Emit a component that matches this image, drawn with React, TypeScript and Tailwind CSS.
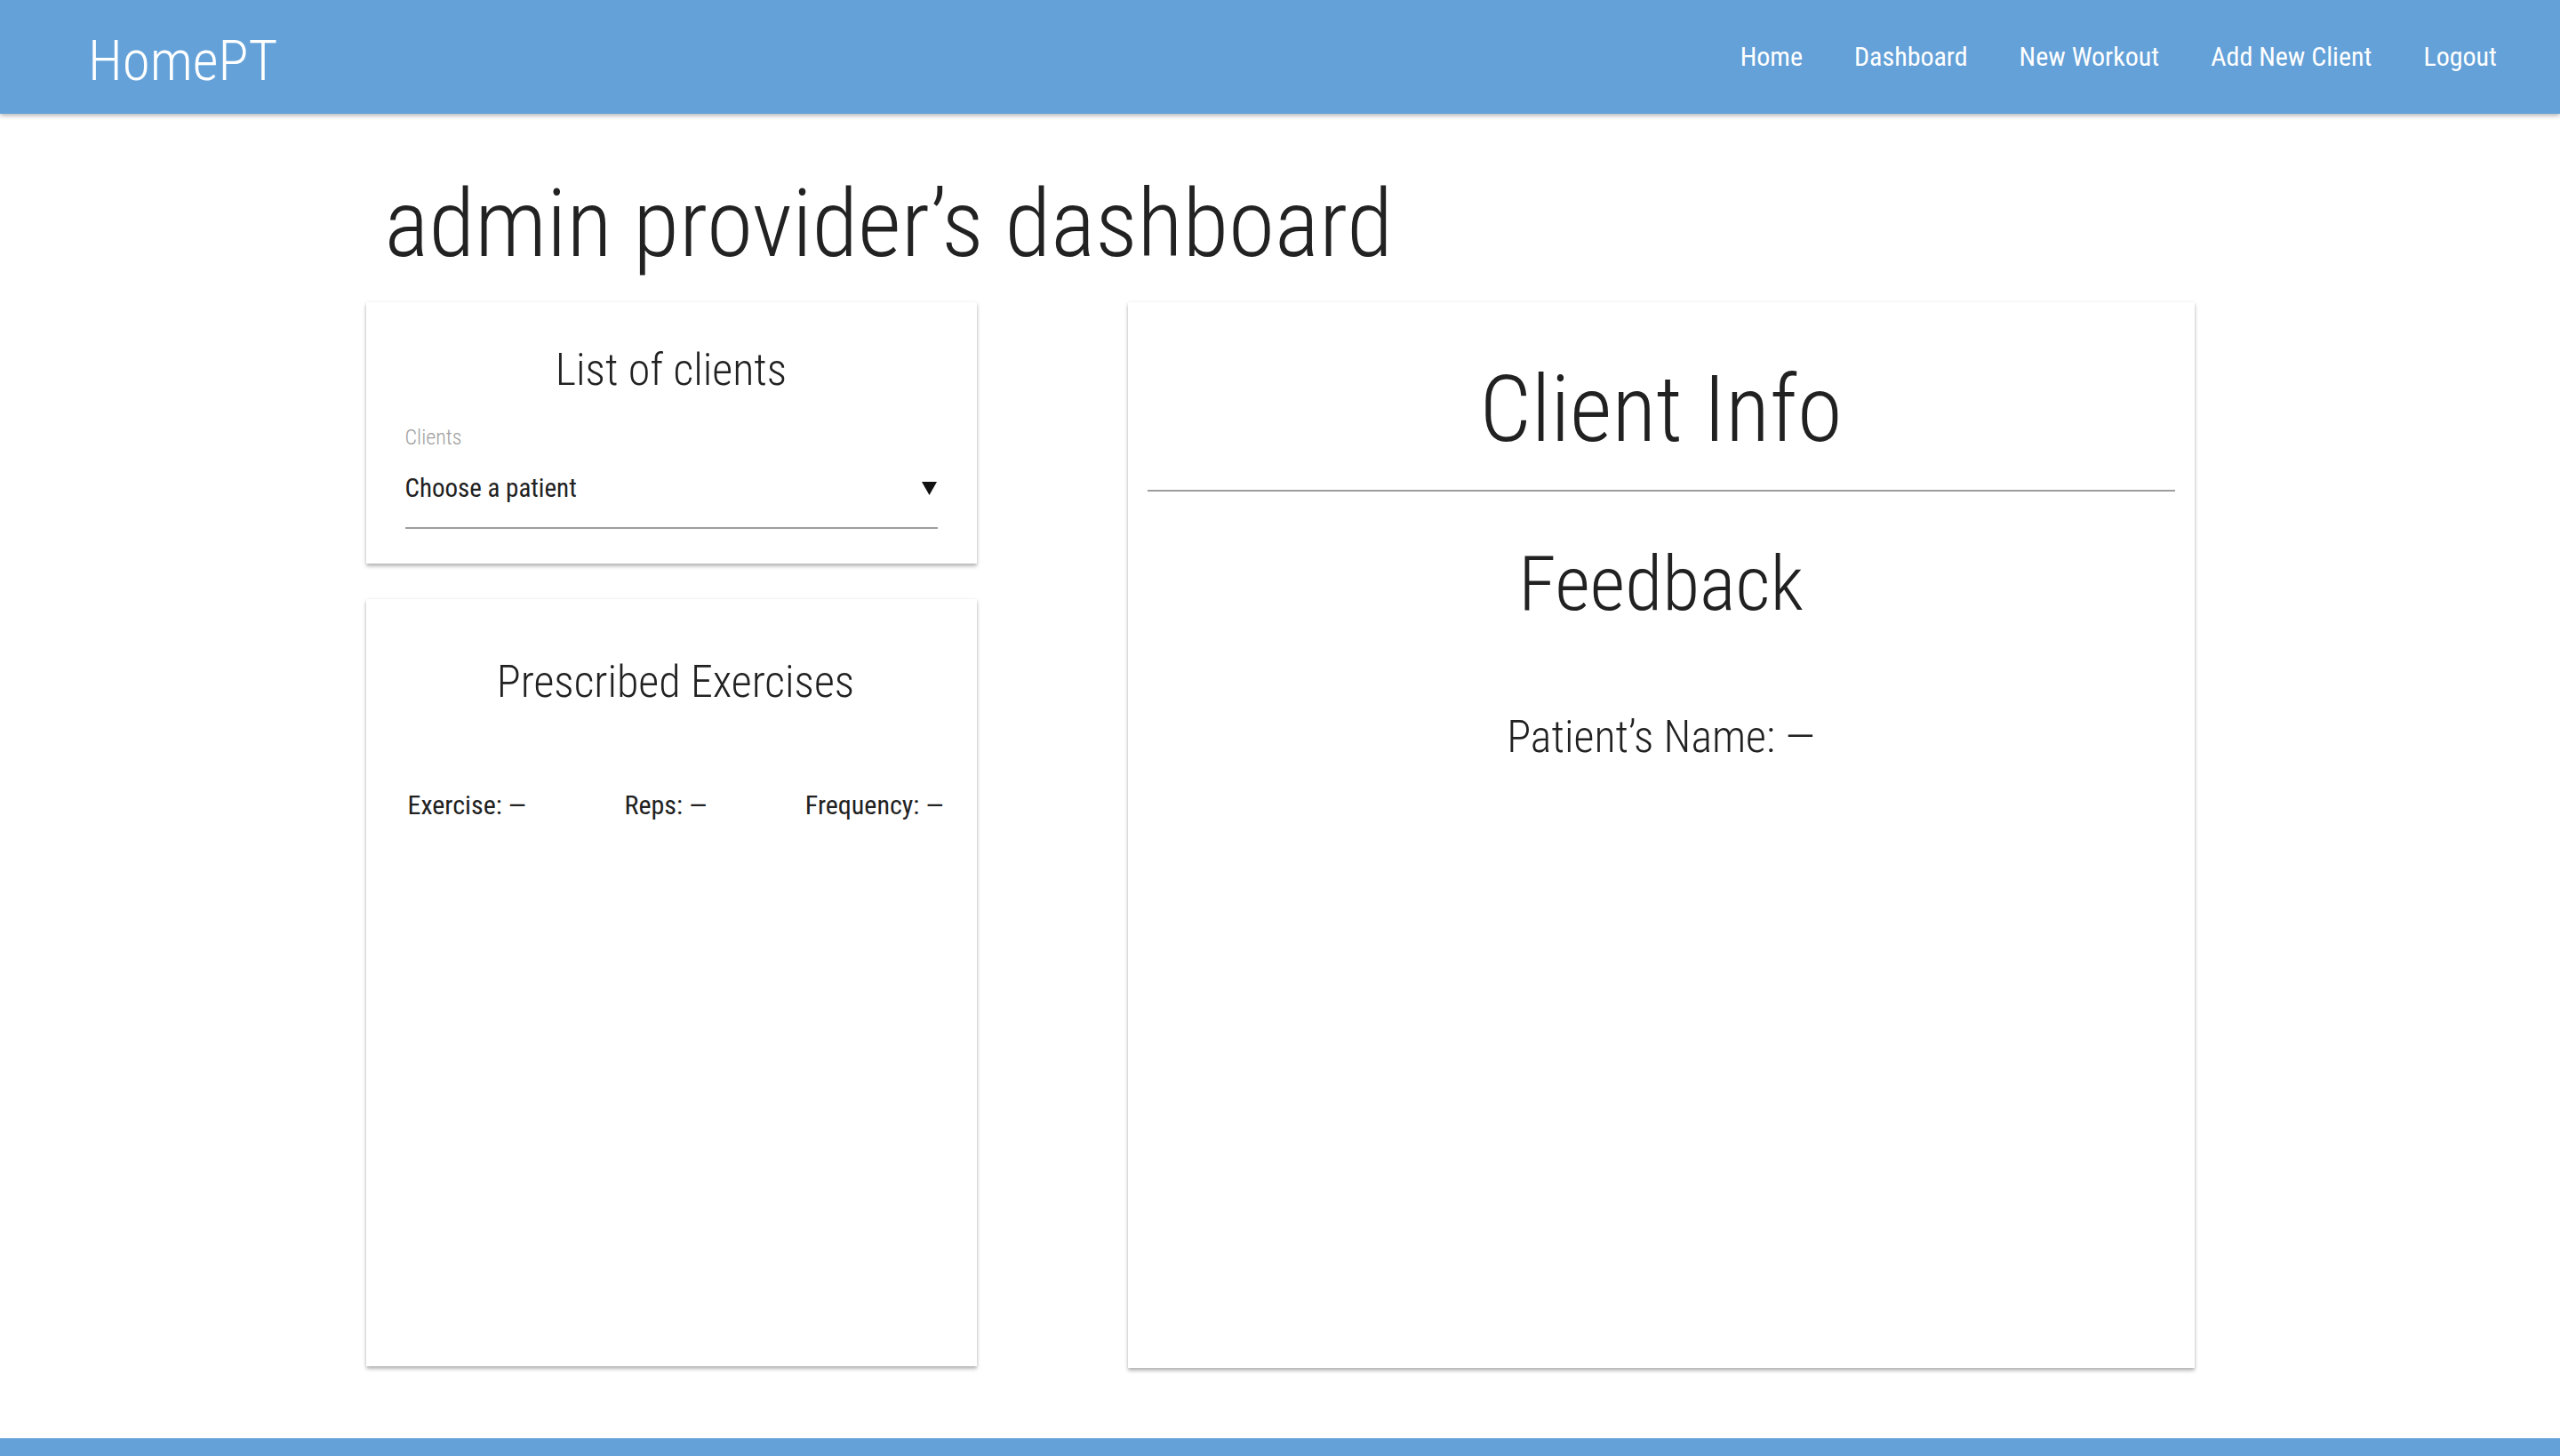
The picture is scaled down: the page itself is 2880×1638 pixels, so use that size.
const navLinks = ["Home", "Dashboard", "New Workout", "Add New Client", "Logout"];

const cardShadow = "shadow-[0_3px_4px_rgba(0,0,0,0.28),0_0_3px_rgba(0,0,0,0.08)]";

export default function App() {
  return (
    <div className="min-h-screen flex flex-col bg-white text-[#212121] font-['Roboto_Condensed','Liberation_Sans',sans-serif]">
      {/* Navbar */}
      <nav className="relative z-10 h-[128px] bg-[#63a1d8] shadow-[0_2px_5px_rgba(0,0,0,0.3)] flex items-center justify-between pl-[99px] pr-[71px]">
        <span className="text-[63px] font-light leading-none text-white pt-[8px]">HomePT</span>
        <ul className="flex items-center gap-[58px]">
          {navLinks.map((link) => (
            <li key={link} className="text-[30px] leading-none text-white">
              {link}
            </li>
          ))}
        </ul>
      </nav>

      {/* Main */}
      <main className="flex-1 w-[2057px] mx-auto pt-[71px] pb-[79px]">
        <h1 className="text-[106px] font-light leading-none text-[#222] pl-[21px]">
          admin provider’s dashboard
        </h1>

        <div className="mt-[35px] grid grid-cols-[687px_1200px] justify-between">
          {/* Left column */}
          <div className="flex flex-col gap-[40px]">
            <section className={`bg-white ${cardShadow} px-[44px] pt-[51px] pb-[39px]`}>
              <h2 className="text-[50px] font-light leading-none text-center">List of clients</h2>
              <p className="mt-[39px] text-[24px] font-light leading-none text-[#9e9e9e]">Clients</p>
              <div className="mt-[31px] flex items-center justify-between border-b-2 border-[#9e9e9e] pb-[29px]">
                <span className="text-[29px] leading-none">Choose a patient</span>
                <svg width="17" height="15" viewBox="0 0 17 15" className="mr-[1px]">
                  <polygon points="0,0 17,0 8.5,15" fill="#111" />
                </svg>
              </div>
            </section>

            <section className={`h-[863px] bg-white ${cardShadow} pt-[68px] pl-[47px] pr-[37px]`}>
              <h2 className="text-[50px] font-light leading-none text-center">Prescribed Exercises</h2>
              <div className="mt-[99px] flex justify-between text-[30px] leading-none">
                <span>Exercise: —</span>
                <span>Reps: —</span>
                <span>Frequency: —</span>
              </div>
            </section>
          </div>

          {/* Right column */}
          <section className={`h-[1199px] bg-white ${cardShadow} px-[22px] pt-[69px] text-center`}>
            <h2 className="text-[103px] font-light leading-none">Client Info</h2>
            <hr className="mt-[39px] border-0 border-t-2 border-[#9e9e9e]" />
            <h3 className="mt-[61px] text-[86px] font-light leading-none">Feedback</h3>
            <p className="mt-[104px] text-[50px] font-light leading-none">Patient’s Name: —</p>
          </section>
        </div>
      </main>

      {/* Footer */}
      <footer className="h-[20px] bg-[#63a1d8]" />
    </div>
  );
}
